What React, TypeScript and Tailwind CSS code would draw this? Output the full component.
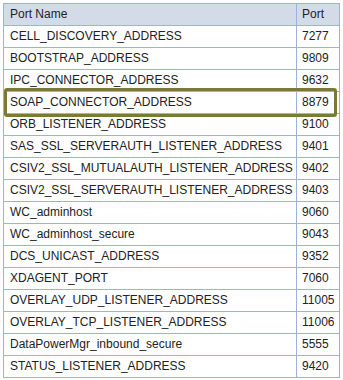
import React from "react";

const rows: [string, string][] = [
  ["CELL_DISCOVERY_ADDRESS", "7277"],
  ["BOOTSTRAP_ADDRESS", "9809"],
  ["IPC_CONNECTOR_ADDRESS", "9632"],
  ["SOAP_CONNECTOR_ADDRESS", "8879"],
  ["ORB_LISTENER_ADDRESS", "9100"],
  ["SAS_SSL_SERVERAUTH_LISTENER_ADDRESS", "9401"],
  ["CSIV2_SSL_MUTUALAUTH_LISTENER_ADDRESS", "9402"],
  ["CSIV2_SSL_SERVERAUTH_LISTENER_ADDRESS", "9403"],
  ["WC_adminhost", "9060"],
  ["WC_adminhost_secure", "9043"],
  ["DCS_UNICAST_ADDRESS", "9352"],
  ["XDAGENT_PORT", "7060"],
  ["OVERLAY_UDP_LISTENER_ADDRESS", "11005"],
  ["OVERLAY_TCP_LISTENER_ADDRESS", "11006"],
  ["DataPowerMgr_inbound_secure", "5555"],
  ["STATUS_LISTENER_ADDRESS", "9420"],
];

export default function App() {
  return (
    <div
      className="w-[343px] h-[380px] bg-white pl-[3px] pt-[3px]"
      style={{ fontFamily: '"Liberation Sans", Arial, sans-serif' }}
    >
      <div className="relative w-[336px]">
        <table className="border-collapse w-[336px] table-fixed text-[12px] text-[#222]">
          <colgroup>
            <col className="w-[293px]" />
            <col className="w-[43px]" />
          </colgroup>
          <thead>
            <tr className="bg-[#d3dbe9] h-[22px]">
              <th className="border border-[#9db2da] text-left font-normal pl-[6px] py-0 leading-[21px]">
                Port Name
              </th>
              <th className="border border-[#9db2da] text-left font-normal pl-[5px] py-0 leading-[21px]">
                Port
              </th>
            </tr>
          </thead>
          <tbody>
            {rows.map(([n, p]) => (
              <tr key={n} className="h-[22px]">
                <td className="border border-[#9db2da] pl-[6px] py-0 leading-[21px] whitespace-nowrap">
                  {n}
                </td>
                <td className="border border-[#9db2da] pl-[5px] py-0 leading-[21px]">{p}</td>
              </tr>
            ))}
          </tbody>
        </table>
        <div className="absolute left-[1px] top-[85px] w-[333px] h-[29px] border-[3px] border-[#7a7a36] rounded-[3px] pointer-events-none" />
      </div>
    </div>
  );
}
